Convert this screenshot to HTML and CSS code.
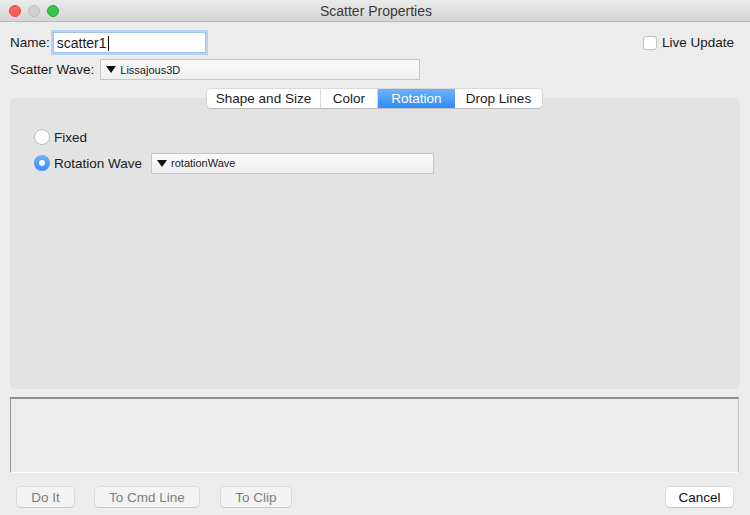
FILE: index.html
```html
<!DOCTYPE html>
<html>
<head>
<meta charset="utf-8">
<link rel="stylesheet" href="styles.css">
</head>
<body>
<div class="window">
  <div class="titlebar">
    <div class="lights">
      <span class="light red"></span>
      <span class="light gray"></span>
      <span class="light green"></span>
    </div>
    <div class="title">Scatter Properties</div>
  </div>
  <div class="row row-name">
    <span class="label">Name:</span>
    <div class="textfield">scatter1<span class="caret"></span></div>
    <div class="spacer"></div>
    <label class="check"><span class="checkbox"></span>Live Update</label>
  </div>
  <div class="row row-wave">
    <span class="label">Scatter Wave:</span>
    <div class="popup popup-wide"><span class="tri"></span>Lissajous3D</div>
  </div>
  <div class="tabs">
    <span class="tab">Shape and Size</span>
    <span class="tab">Color</span>
    <span class="tab active">Rotation</span>
    <span class="tab">Drop Lines</span>
  </div>
  <div class="panel">
    <div class="radio-row">
      <span class="radio"></span><span class="rlabel">Fixed</span>
    </div>
    <div class="radio-row">
      <span class="radio on"></span><span class="rlabel">Rotation Wave</span>
      <div class="popup popup-rot"><span class="tri"></span>rotationWave</div>
    </div>
  </div>
  <div class="log"></div>
  <div class="buttons">
    <span class="btn dis b-doit">Do It</span>
    <span class="btn dis b-cmd">To Cmd Line</span>
    <span class="btn dis b-clip">To Clip</span>
    <div class="spacer"></div>
    <span class="btn b-cancel">Cancel</span>
  </div>
</div>
</body>
</html>
```
FILE: styles.css
```css
html, body {
  margin: 0;
  padding: 0;
  background: #ececec;
}
body {
  font-family: "Liberation Sans", Arial, sans-serif;
  font-size: 13.5px;
  color: #1a1a1a;
}
.window {
  width: 750px;
  height: 515px;
  display: flex;
  flex-direction: column;
  background: #ececec;
  overflow: hidden;
}
.titlebar {
  height: 22px;
  flex: none;
  background: linear-gradient(#ebebeb, #d5d5d5);
  border-bottom: 1px solid #b9b9b9;
  box-sizing: border-box;
  display: flex;
  align-items: center;
  position: relative;
}
.lights {
  display: flex;
  gap: 7px;
  padding-left: 9px;
}
.light {
  width: 12px;
  height: 12px;
  border-radius: 50%;
  box-sizing: border-box;
}
.red { background: #fc605c; border: 1px solid #de4a45; }
.gray { background: #d0d0d0; border: 1px solid #bdbdbd; }
.green { background: #34c84a; border: 1px solid #27aa35; }
.title {
  flex: 1;
  text-align: center;
  margin-left: -57px;
  font-size: 14px;
  color: #3a3a3a;
}
.row {
  display: flex;
  align-items: center;
  padding: 0 16px 0 10px;
}
.row-name {
  margin-top: 10px;
  height: 21px;
}
.row-wave {
  margin-top: 6px;
  height: 21px;
}
.label {
  margin-right: 3px;
}
.spacer { flex: 1; }
.textfield {
  width: 153px;
  height: 21px;
  box-sizing: border-box;
  border: 1px solid #9fc2ef;
  box-shadow: 0 0 0 2px #b7d3f4;
  background: #fff;
  padding: 1px 3px 0;
  font-size: 14px;
  line-height: 18px;
  display: flex;
  align-items: center;
}
.caret {
  display: inline-block;
  width: 1px;
  height: 15px;
  background: #000;
  margin-left: 1px;
}
.check {
  display: flex;
  align-items: center;
}
.checkbox {
  width: 14px;
  height: 14px;
  box-sizing: border-box;
  border: 1px solid #c2c2c2;
  border-radius: 3px;
  background: #fff;
  margin-right: 5px;
}
.popup {
  height: 21px;
  box-sizing: border-box;
  border: 1px solid #c6c6c6;
  background: linear-gradient(#fafafa, #efefef);
  font-size: 11px;
  display: flex;
  align-items: center;
  padding-left: 5px;
}
.popup .tri {
  width: 0;
  height: 0;
  border-left: 5px solid transparent;
  border-right: 5px solid transparent;
  border-top: 7px solid #111;
  margin-right: 4px;
}
.popup-wide {
  width: 320px;
  margin-left: 3px;
}
.tabs {
  display: flex;
  align-self: flex-start;
  margin: 9px 0 -10px 207px;
  height: 19px;
  border-radius: 4px;
  background: #fff;
  box-shadow: 0 0 0 0.5px #c4c4c4, 0 1px 1px rgba(0,0,0,0.18);
  position: relative;
  z-index: 1;
  overflow: hidden;
}
.tab {
  display: flex;
  align-items: center;
  justify-content: center;
  color: #1c1c1c;
  border-right: 1px solid #dadada;
  box-sizing: border-box;
}
.tab:last-child { border-right: none; }
.tab:nth-child(1) { width: 114px; }
.tab:nth-child(2) { width: 57px; }
.tab:nth-child(3) { width: 77px; }
.tab:nth-child(4) { width: 87px; }
.tab.active {
  background: linear-gradient(#6cb3fa, #2f8cf7);
  color: #fff;
  border-right: none;
}
.panel {
  margin: 0 10px;
  height: 291px;
  flex: none;
  background: #e3e3e3;
  border-radius: 5px;
  box-sizing: border-box;
  padding: 31px 0 0 24px;
  display: flex;
  flex-direction: column;
}
.radio-row {
  display: flex;
  align-items: center;
  height: 16px;
}
.radio-row + .radio-row {
  margin-top: 10px;
}
.radio {
  width: 16px;
  height: 16px;
  box-sizing: border-box;
  border-radius: 50%;
  border: 1px solid #bdbdbd;
  background: #fff;
  position: relative;
}
.radio.on {
  border: none;
  background: linear-gradient(#69b1fa, #3a8ff5);
}
.radio.on::after {
  content: "";
  position: absolute;
  left: 5px;
  top: 5px;
  width: 6px;
  height: 6px;
  border-radius: 50%;
  background: #fff;
}
.rlabel {
  margin-left: 4px;
  font-size: 13.5px;
}
.popup-rot {
  width: 283px;
  margin-left: 9px;
}
.log {
  margin: 8px 11px 0 10px;
  height: 76px;
  flex: none;
  box-sizing: border-box;
  border: 1px solid #c9c9c9;
  border-top: 2px solid #8e8e8e;
  border-left: 1px solid #9a9a9a;
  border-bottom: 1px solid #fff;
  background: #ececec;
}
.buttons {
  display: flex;
  align-items: center;
  margin-top: 14px;
  padding: 0 17px 0 17px;
  height: 20px;
}
.btn {
  height: 20px;
  box-sizing: border-box;
  display: flex;
  align-items: center;
  justify-content: center;
  background: #fff;
  border-radius: 4px;
  box-shadow: 0 0 0 0.5px #c8c8c8, 0 1px 1px rgba(0,0,0,0.15);
  color: #111;
}
.btn.dis {
  background: #f3f3f3;
  color: #7e7e7e;
}
.b-doit { width: 57px; }
.b-cmd { width: 104px; margin-left: 21px; }
.b-clip { width: 70px; margin-left: 22px; }
.b-cancel { width: 67px; }
```
